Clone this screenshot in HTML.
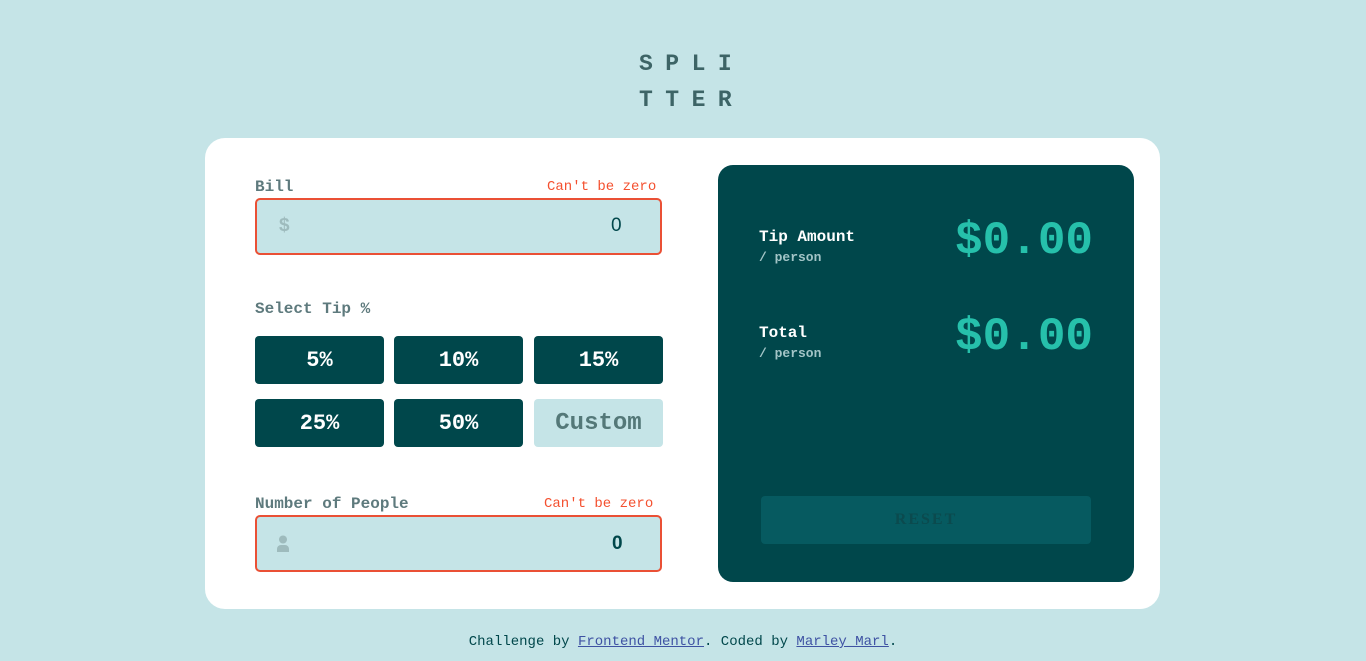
<!DOCTYPE html>
<html><head><meta charset="utf-8"><style>
*{box-sizing:border-box;margin:0;padding:0}
body{width:1366px;height:661px;background:#c5e4e7;font-family:"Liberation Mono",monospace;font-weight:bold;position:relative;overflow:hidden}
.abs{position:absolute}
.title{left:639px;top:46px;font-size:23px;line-height:36px;letter-spacing:12.5px;color:#3d6466}
.card{left:205px;top:138px;width:955px;height:471px;background:#fff;border-radius:20px}
.lbl{font-size:16px;color:#5e7a7d}
.err{font-size:14px;color:#f4502f;font-weight:normal}
.inp{background:#c5e4e7;border:2px solid #ea5035;border-radius:5px;width:407px;height:57px}
.btn{width:129px;height:48px;background:#00474b;border-radius:4px;color:#fff;font-size:22px;text-align:center;line-height:50px}
.right{left:718px;top:165px;width:416px;height:417px;background:#00474b;border-radius:15px}
.rl{color:#fff;font-size:16px}
.rs{color:#a3c5c7;font-size:13px}
.amt{color:#26c0ab;font-size:46px}
</style></head><body>
<div class="abs title">SPLI<br>TTER</div>
<div class="abs card"></div>
<div class="abs lbl" style="left:255px;top:178px">Bill</div>
<div class="abs err" style="left:547px;top:179px">Can't be zero</div>
<div class="abs inp" style="left:255px;top:198px"></div>
<div class="abs" style="left:279px;top:215px;font-size:19px;color:#9ebbbd;font-family:'Liberation Sans',sans-serif">$</div>
<div class="abs" style="left:611px;top:215px;font-size:19px;color:#00474b;font-weight:normal;font-family:'Liberation Sans',sans-serif">0</div>
<div class="abs lbl" style="left:255px;top:300px">Select Tip %</div>
<div class="abs btn" style="left:255px;top:336px">5%</div>
<div class="abs btn" style="left:394px;top:336px">10%</div>
<div class="abs btn" style="left:534px;top:336px">15%</div>
<div class="abs btn" style="left:255px;top:399px">25%</div>
<div class="abs btn" style="left:394px;top:399px">50%</div>
<div class="abs btn" style="left:534px;top:399px;background:#c5e4e7;color:#547878;font-size:24px">Custom</div>
<div class="abs lbl" style="left:255px;top:495px">Number of People</div>
<div class="abs err" style="left:544px;top:496px">Can't be zero</div>
<div class="abs inp" style="left:255px;top:515px"></div>
<svg class="abs" style="left:276px;top:535px" width="14" height="18" viewBox="0 0 14 18"><circle cx="7" cy="4.5" r="4" fill="#9ebbbd"/><path d="M1 17v-3a4 4 0 0 1 4-4h4a4 4 0 0 1 4 4v3z" fill="#9ebbbd"/></svg>
<div class="abs" style="left:612px;top:533px;font-size:19px;color:#00474b;font-family:'Liberation Sans',sans-serif;font-weight:bold">0</div>
<div class="abs right"></div>
<div class="abs rl" style="left:759px;top:228px">Tip Amount</div>
<div class="abs rs" style="left:759px;top:250px">/ person</div>
<div class="abs amt" style="left:955px;top:215px">$0.00</div>
<div class="abs rl" style="left:759px;top:324px">Total</div>
<div class="abs rs" style="left:759px;top:346px">/ person</div>
<div class="abs amt" style="left:955px;top:311px">$0.00</div>
<div class="abs" style="left:761px;top:496px;width:330px;height:48px;background:#065a60;border-radius:4px;color:#0b4a4e;font-family:'Liberation Serif',serif;font-size:16px;letter-spacing:2px;text-align:center;line-height:48px">RESET</div>
<div class="abs" style="left:0;width:1366px;top:634px;text-align:center;font-size:14px;color:#00474b;font-weight:normal">Challenge by <a style="color:#3e52a3;text-decoration:underline">Frontend Mentor</a>. Coded by <a style="color:#3e52a3;text-decoration:underline">Marley_Marl</a>.</div>
</body></html>
